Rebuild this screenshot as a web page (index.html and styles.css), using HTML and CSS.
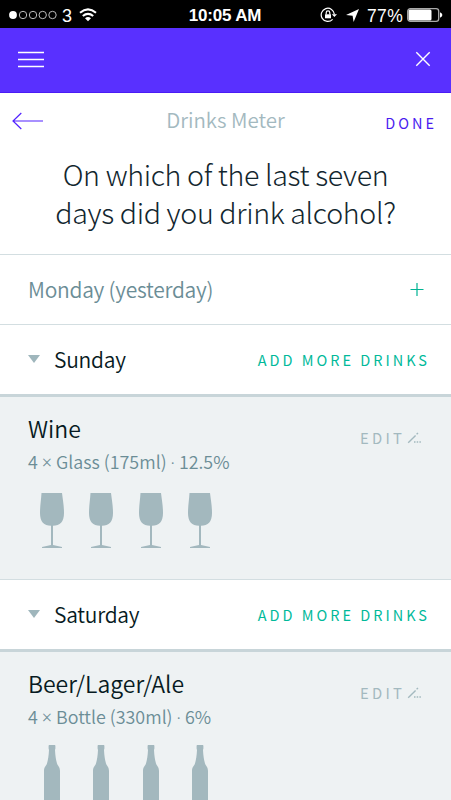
FILE: index.html
```html
<!DOCTYPE html>
<html lang="en">
<head>
    <meta charset="UTF-8">
    <meta name="viewport" content="width=device-width, initial-scale=1.0">
    <title>Drinks Meter</title>
    <link rel="stylesheet" href="styles.css">
</head>
<body>
    <!-- Shared shapes -->
    <svg class="defs" width="0" height="0">
        <symbol id="glass" viewBox="0 0 26 56">
            <path d="M2.5 0H23C24 8 25 13 25 20C25 29 21 32.5 14 32.8V52L23 54V55H3V54L12 52V32.8C5 32.5 1 29 1 20C1 13 2 8 2.5 0Z"/>
        </symbol>
        <symbol id="bottle" viewBox="0 0 26 80">
            <path d="M10.2 0H15.8Q16.4 0 16.4 1V3.5L16 5C16.3 11 17 15 18 18.5C19 21 21 22 21 26V78H5V26C5 22 7 21 8 18.5C9 15 9.7 11 10 5L9.6 3.5V1Q9.6 0 10.2 0Z"/>
        </symbol>
        <symbol id="pencil" viewBox="0 0 16 12">
            <path d="M1.2 10.8L8.6 3.6" stroke="currentColor" stroke-width="1.4"/>
            <path d="M9.6 2.2L11 .9M7 10h1.5M9.7 10h1.5M12.4 10h1.5" stroke="currentColor" stroke-width="1.4"/>
        </symbol>
    </svg>

    <div class="status-bar">
        <div class="status-left">
            <svg width="48" height="10" viewBox="0 0 48 10" fill="none" stroke="#bbb" stroke-width="1">
                <circle cx="4" cy="5" r="3.9" fill="#fff" stroke="none"/>
                <circle cx="14" cy="5" r="3.7"/>
                <circle cx="24" cy="5" r="3.7"/>
                <circle cx="33.7" cy="5" r="3.7"/>
                <circle cx="43.5" cy="5" r="3.7"/>
            </svg>
            <span class="carrier">3</span>
            <svg class="wifi" width="18" height="14" viewBox="0 0 18 14" fill="none" stroke="#fff" stroke-width="2.1">
                <path d="M1 4.8Q9-2 17 4.8"/>
                <path d="M3.8 8Q9 3.6 14.2 8"/>
                <path d="M6 10.2Q9 7.8 12 10.2L9 13.2Z" fill="#fff" stroke="none"/>
            </svg>
        </div>
        <div class="clock">10:05 AM</div>
        <div class="status-right">
            <svg width="18" height="16" viewBox="0 0 18 16" fill="none" stroke="#fff" stroke-width="1.2">
                <path d="M12.6 12.4A6.6 6.6 0 1 1 14.4 7.4"/>
                <path d="M11.8 7.2H17L14.4 10Z" fill="#fff" stroke="none"/>
                <path d="M5 7.3H11V11.3H5Z" fill="#fff" stroke="none"/>
                <path d="M6.2 7.5V5.7A1.8 1.8 0 0 1 9.8 5.7V7.5"/>
            </svg>
            <svg class="location" width="13" height="13" viewBox="0 0 13 13" fill="#fff">
                <path d="M13 0L7.6 13L6.6 6.8L0 6Z"/>
            </svg>
            <span class="percent">77%</span>
            <svg width="36" height="14" viewBox="0 0 36 14">
                <rect x=".7" y=".7" width="31" height="12.6" rx="2.6" fill="none" stroke="#aaa" stroke-width="1.3"/>
                <rect x="1.5" y="1.5" width="23" height="11" rx="1.5" fill="#fff"/>
                <path d="M33 4.2Q35.4 5.2 35.4 7T33 9.8Z" fill="#fff"/>
            </svg>
        </div>
    </div>

    <div class="header">
        <svg width="26" height="18" viewBox="0 0 26 18" stroke="#fff" stroke-width="1.7">
            <path d="M0 2.5H26M0 9.5H26M0 16.5H26"/>
        </svg>
        <svg width="16" height="16" viewBox="0 0 16 16" stroke="#fff" stroke-width="1.4">
            <path d="M1.3 1.3L14.7 14.7M14.7 1.3L1.3 14.7"/>
        </svg>
    </div>

    <div class="nav">
        <svg width="31" height="18" viewBox="0 0 31 18" fill="none" stroke="#5222ff" stroke-width="1.2">
            <path d="M31 9H1M9.3 1L1 9L9.3 17"/>
        </svg>
        <span class="nav-title">Drinks Meter</span>
        <a class="link done">DONE</a>
    </div>

    <h1>On which of the last seven<br>days did you drink alcohol?</h1>

    <div class="day day-empty">
        <span class="day-name">Monday (yesterday)</span>
        <svg class="plus" width="14" height="14" viewBox="0 0 14 14" stroke="#00b393" stroke-width="1.2">
            <path d="M.5 6.5H13.5M7 0V13"/>
        </svg>
    </div>

    <div class="day day-open">
        <i class="arrow"></i>
        <span class="day-name">Sunday</span>
        <a class="link add">ADD MORE DRINKS</a>
    </div>
    <div class="drink">
        <div class="drink-head">
            <h2>Wine</h2>
            <a class="link edit">EDIT <svg width="16" height="12"><use href="#pencil"/></svg></a>
        </div>
        <p>4 <span class="sign">×</span> Glass (175ml) <span class="sign">·</span> 12.5%</p>
        <div class="units">
            <svg width="26" height="56"><use href="#glass"/></svg>
            <svg width="26" height="56"><use href="#glass"/></svg>
            <svg width="26" height="56"><use href="#glass"/></svg>
            <svg width="26" height="56"><use href="#glass"/></svg>
        </div>
    </div>

    <div class="day day-open">
        <i class="arrow"></i>
        <span class="day-name">Saturday</span>
        <a class="link add">ADD MORE DRINKS</a>
    </div>
    <div class="drink">
        <div class="drink-head">
            <h2>Beer/Lager/Ale</h2>
            <a class="link edit">EDIT <svg width="16" height="12"><use href="#pencil"/></svg></a>
        </div>
        <p>4 <span class="sign">×</span> Bottle (330ml) <span class="sign">·</span> 6%</p>
        <div class="units bottles">
            <svg width="26" height="80"><use href="#bottle"/></svg>
            <svg width="26" height="80"><use href="#bottle"/></svg>
            <svg width="26" height="80"><use href="#bottle"/></svg>
            <svg width="26" height="80"><use href="#bottle"/></svg>
        </div>
    </div>
</body>
</html>
```
FILE: styles.css
```css
* {
    box-sizing: border-box;
}

body {
    margin: 0;
    height: 800px;
    overflow: hidden;
    background: #fff;
    color: #071a22;
    font-family: "Noto Sans CJK SC", "Noto Sans CJK JP", sans-serif;
    font-weight: 400;
}

svg {
    display: block;
    flex: none;
}

.defs {
    position: absolute;
}

/* Status bar */
.status-bar {
    display: grid;
    grid-template-columns: 1fr auto 1fr;
    align-items: center;
    height: 28px;
    padding: 0 8px 0 9px;
    background: #000;
    color: #fff;
    font-family: "Liberation Sans", Arial, sans-serif;
    font-weight: 400;
    font-size: 17px;
    line-height: 28px;
}

.status-left,
.status-right {
    display: flex;
    align-items: center;
}

.status-right {
    justify-content: flex-end;
}

.carrier {
    margin: 1px 7px 0 5px;
    font-size: 18px;
}

.clock {
    font-weight: bold;
    letter-spacing: -0.2px;
    padding: 2px 2px 0 0;
}

.location {
    margin: 0 8px 0 8px;
}

.percent {
    margin: 1px 4px 0 0;
    font-size: 17.5px;
    letter-spacing: 0.3px;
}

/* Purple header */
.header {
    display: flex;
    justify-content: space-between;
    align-items: center;
    height: 65px;
    padding: 0 20px 2px 18px;
    background: #5930ff;
    border-bottom: 1px solid #4a1cf5;
}

.nav {
    display: grid;
    grid-template-columns: 1fr auto 1fr;
    align-items: center;
    height: 56px;
    padding: 0 12px;
}

.nav-title {
    color: #a3b9bf;
    font-size: 20.5px;
    line-height: 30px;
    font-weight: 350;
    padding-bottom: 4px;
}

.link {
    font-size: 14.5px;
    line-height: 20px;
    letter-spacing: 3px;
}

.done {
    justify-self: end;
    color: #4a1cf0;
    padding: 3px 2px 0 0;
}

h1 {
    height: 105px;
    margin: 0;
    padding-top: 6px;
    color: #12262e;
    font-size: 28.6px;
    line-height: 38px;
    font-weight: 300;
    letter-spacing: -0.35px;
    text-align: center;
}

/* Day rows */
.day {
    display: flex;
    align-items: center;
    height: 70px;
    padding: 0 21px 0 28px;
    border-top: 1px solid #d3dee1;
    background: #fff;
}

.day-name {
    font-size: 21px;
    line-height: 30px;
    font-weight: 350;
    letter-spacing: -0.25px;
    padding-bottom: 2px;
}

.day-empty .day-name {
    color: #6b8d96;
}

.plus {
    margin: 0 6px 0 auto;
}

.day-open {
    height: 73px;
    border-bottom: 3px solid #c8d5d9;
}

.arrow {
    width: 0;
    margin: 0 14px 2px 0;
    border: 6px solid transparent;
    border-top: 8px solid #9fb6bc;
    border-bottom: 0;
}

.add {
    margin-left: auto;
    padding-top: 1px;
    color: #00b99a;
}

/* Drinks of a day */
.drink {
    height: 182px;
    padding: 16px 28px 0 28px;
    background: #eef2f3;
}

.drink-head {
    display: flex;
    justify-content: space-between;
    height: 30px;
}

h2 {
    margin: 0;
    font-size: 23px;
    line-height: 30px;
    font-weight: 350;
}

.edit {
    display: flex;
    align-items: flex-start;
    gap: 2px;
    padding-top: 15px;
    color: #a3b9bf;
    font-size: 14.8px;
    letter-spacing: 3.2px;
}

.edit svg {
    margin-top: 4px;
}

.drink p {
    margin: 5px 0 0;
    color: #6b8d96;
    font-size: 17.9px;
    line-height: 26px;
    font-weight: 350;
}

/* Narrow multiplication sign and middle dot */
.sign {
    font-family: "Noto Sans", sans-serif;
    line-height: 1;
}

.units {
    display: flex;
    gap: 23.3px;
    margin: 19px 0 0 11px;
    fill: #a3b8be;
}

.bottles {
    margin-top: 16px;
}
```
